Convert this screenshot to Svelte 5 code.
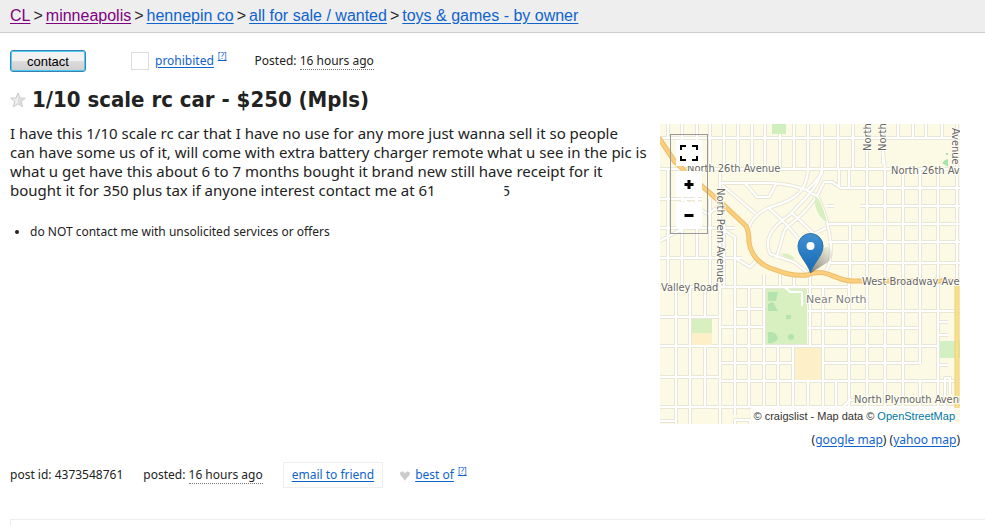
<script>
  const crumbs = [
    { label: 'CL', visited: true },
    { label: 'minneapolis', visited: true },
    { label: 'hennepin co' },
    { label: 'all for sale / wanted' },
    { label: 'toys & games - by owner' }
  ];

  const bodyLines = [
    'I have this 1/10 scale rc car that I have no use for any more just wanna sell it so people',
    'can have some us of it, will come with extra battery charger remote what u see in the pic is',
    'what u get have this about 6 to 7 months bought it brand new still have receipt for it'
  ];

  // [x, from, to]
  const avenues = [
    [8, 0, 14], [22, 0, 163], [37, 0, 134], [50, 0, 45], [64, 0, 45], [78, 0, 45],
    [92, 0, 45], [105, 0, 45], [120, 0, 45], [134, 0, 45], [148, 0, 45],
    [8, 45, 163], [50, 75, 163], [64, 100, 163],
    [16, 163, 300], [30, 163, 300], [45, 163, 193], [45, 222, 283], [60, 45, 300],
    [75, 134, 291], [89, 163, 283], [104, 150, 283], [118, 222, 257], [133, 222, 257], [148, 257, 283],
    [162, 0, 50], [178, 0, 45], [193, 0, 45], [207, 0, 45], [223, 0, 40],
    [238, 0, 15], [253, 0, 15], [266, 0, 15], [282, 0, 15],
    [179, 45, 64], [189, 45, 64], [190, 100, 155],
    [207, 45, 283], [225, 45, 283], [243, 45, 283], [260, 45, 240], [278, 45, 283], [297, 0, 160],
    [163, 163, 283], [189, 157, 283], [176, 258, 283], [260, 258, 283],
    [118, 257, 283], [133, 257, 283], [150, 163, 222], [150, 150, 163], [120, 150, 163], [134, 150, 163]
  ];

  // [y, from, to]
  const streets = [
    [14, 0, 300], [45, 0, 300], [75, 0, 42], [104, 0, 75], [134, 0, 82],
    [163, 0, 189], [193, 0, 60], [222, 0, 278], [253, 0, 60], [283, 0, 75],
    [185, 75, 104], [203, 60, 104], [239, 60, 133], [257, 60, 300], [283, 60, 300], [297, 0, 16],
    [64, 180, 300], [82, 200, 300], [100, 168, 300], [118, 168, 300], [139, 168, 300],
    [187, 148, 300], [204, 148, 260], [239, 163, 260],
    [82, 167, 174], [198, 278, 288], [211, 278, 288], [241, 278, 288]
  ];

  const lanes = [
    'M61 59 H110 Q132 60 146 66 L157 72',
    'M62 61 L96 90 M85 59 L97 73 H109 L116 60',
    'M148 45 C147 72 128 78 108 84 C98 89 92 95 89 103',
    'M162 45 C158 66 142 76 131 90 C110 104 104 116 110 130 L134 138 L148 149',
    'M109 84 L126 100 L138 114 M131 88 L154 110 L166 104',
    'M157 72 C146 88 136 96 126 104 C121 112 122 121 116 134',
    'M146 66 C154 62 158 52 162 50',
    'M157 72 C164 84 169 104 171 121 Q171 140 165 150',
    'M157 72 L164 58 H172 L181 64',
    'M60 104 L75 113 V134 M75 134 L90 143 L98 135',
    'M0 117 L28 102 M22 75 L48 90 L62 80 M36 60 L36 80',
    'M222 20 L225 45',
    'M125 163 L130 168 L142 168 L142 182 M75 300 L75 296 L90 296 L90 300',
    'M178 288 L190 276 L200 276 M285 283 L285 254 L290 254 L290 270'
  ];

  const gridPath = [
    ...avenues.map(([x, a, b]) => `M${x} ${a}V${b}`),
    ...streets.map(([y, a, b]) => `M${a} ${y}H${b}`),
    ...lanes
  ].join(' ');

  const highway =
    'M-1 14 L15 38 L25 47 L43 63 L67 84 L86 102 Q89 107 89 118 C91 134 104 143 116 146 C128 151 138 152 147 151 C154 148 162 148 168 150 C178 154 184 157 192 157 L300 157';
</script>

<header>
  <nav aria-label="Breadcrumb">
    {#each crumbs as crumb, i}
      {#if i > 0}<span class="sep">&gt;</span>{/if}<a href="#top" class:visited={crumb.visited}>{crumb.label}</a>
    {/each}
  </nav>
</header>

<main>
  <div class="toolbar">
    <button class="contact" type="button">contact</button>
    <div class="flag">
      <input type="checkbox" aria-label="flag as prohibited" />
      <a href="#prohibited">prohibited</a>
      <a class="help" href="#help">[?]</a>
    </div>
    <div>Posted: <time>16 hours ago</time></div>
  </div>

  <h1>
    <svg class="star" viewBox="0 0 16 16" aria-hidden="true">
      <path d="M8 1 L10 6 L15.3 6.2 L11.2 9.5 L12.6 14.8 L8 11.8 L3.4 14.8 L4.8 9.5 L.7 6.2 L6 6 Z" />
      <path class="facet" d="M8 11 L12 14 L10.500 9.500 L14 7 H9.500 L8 4 Z" />
    </svg>
    1/10 scale rc car - $250 (Mpls)
  </h1>

  <div class="posting">
    <section class="description">
      <p>
        {#each bodyLines as line}
          {line}<br />
        {/each}
        bought it for 350 plus tax if anyone interest contact me at <span class="area">61</span><span class="last">5</span>
      </p>
      <ul>
        <li>do NOT contact me with unsolicited services or offers</li>
      </ul>
    </section>

    <aside>
      <div class="map">
        <svg class="tiles" viewBox="0 0 300 300" role="img" aria-label="Map of Near North">
          <defs>
            <linearGradient id="pin" x1="0" y1="0" x2="0" y2="1">
              <stop offset="0" stop-color="#3f91d0" />
              <stop offset="1" stop-color="#1468b4" />
            </linearGradient>
            <linearGradient id="shade" x1="0" y1="1" x2="1" y2="0">
              <stop offset="0" stop-color="#333" stop-opacity=".6" />
              <stop offset="1" stop-color="#333" stop-opacity="0" />
            </linearGradient>
          </defs>
          <rect width="300" height="300" fill="#fcf9e4" />
          <path class="casing" d={gridPath} />
          <path class="street" d={gridPath} />

          <rect x="112" y="0" width="14" height="10" fill="#cfefbd" />
          <path d="M282 39 L285 36 L288 35 V43 Z M286 29 h2 v2 h-2 z" fill="#a9e3ae" />
          <path d="M155 72 Q161 74 167 98 Q158 94 155 80 Z" fill="#d8efc0" />
          <path d="M121 130 Q129 128 135 135 Q128 136 121 130 Z" fill="#d8efc0" />
          <rect x="106" y="165" width="41" height="55" fill="#d8efc0" />
          <path d="M108 168 h10 l-2 9 h-8z M108 180 l5-2 5 9 h-10z M108 208 q9-1 10 7 q-4 5-10 4z M126 191 h5 v4 h-5z" fill="#b4e4ae" />
          <circle cx="131" cy="213" r="3" fill="#b4e4ae" />
          <path class="street" d="M125 163 L130 168 H142 V182" />
          <rect x="32" y="195" width="20" height="14" fill="#d8efc0" />
          <rect x="32" y="209" width="20" height="12" fill="#fdf0c9" />
          <rect x="135" y="224" width="26" height="32" fill="#fdf0c9" />
          <rect x="280" y="217" width="20" height="17" fill="#d3f0c2" />

          <path d="M297 160 V300" fill="none" stroke="#ead07c" stroke-width="5" />
          <path d="M297 160 V300" fill="none" stroke="#fbe08a" stroke-width="3" />
          <path class="highway-edge" d={highway} />
          <path class="highway" d={highway} />

          <g class="labels">
            <text x="27" y="48">North 26th Avenue</text>
            <text x="231" y="50">North 26th Avenue</text>
            <text transform="translate(57 64) rotate(90)">North Penn Avenue</text>
            <text x="1" y="167">Valley Road</text>
            <text x="202" y="161">West Broadway Avenue</text>
            <text x="194" y="279">North Plymouth Avenue</text>
            <text class="district" x="146" y="179">Near North</text>
            <text transform="translate(211 27) rotate(-90)">North Penn</text>
            <text transform="translate(226 27) rotate(-90)">North Penn</text>
            <text transform="translate(292 4) rotate(90)">Avenue</text>
          </g>

          <path d="M151 149 C154 137 157 127 166 123 C174 122 174 132 168 138 Z" fill="url(#shade)" />
          <path d="M150.500 149 C148 139 138 132 138 122 A12 12 0 0 1 163 122 C163 132 153 139 150.500 149 Z" fill="url(#pin)" stroke="#2b72a8" />
          <circle cx="150.500" cy="122" r="4" fill="#fff" />
        </svg>

        <div class="controls">
          <button type="button" aria-label="Full screen">
            <svg viewBox="0 0 18 16"><path d="M1 5 V1 H6 M12 1 H17 V5 M17 11 V15 H12 M6 15 H1 V11" /></svg>
          </button>
          <button type="button" aria-label="Zoom in">
            <svg viewBox="0 0 18 16"><path class="bold" d="M4.500 8.500 H13.500 M9 4 V13" /></svg>
          </button>
          <button type="button" aria-label="Zoom out">
            <svg viewBox="0 0 18 16"><path class="bold" d="M4.500 8.500 H13.500" /></svg>
          </button>
        </div>

        <div class="attribution">© craigslist - Map data © <a href="#osm">OpenStreetMap</a></div>
      </div>
      <p class="map-links">(<a href="#google">google map</a>) (<a href="#yahoo">yahoo map</a>)</p>
    </aside>
  </div>

  <footer>
    <span>post id: 4373548761</span>
    <span>posted: <time>16 hours ago</time></span>
    <a class="email" href="#email">email to friend</a>
    <div class="best">
      <svg viewBox="0 0 12 12" aria-hidden="true">
        <path d="M6 12 C5 9 1 7 1 4.500 C1 2 5 1.500 6 4.500 C7 1.500 11 2 11 4.500 C11 7 7 9 6 12 Z" />
      </svg>
      <a href="#best">best of</a>
      <a class="help" href="#help">[?]</a>
    </div>
  </footer>
</main>

<div class="next-box"></div>

<style>
  :global(body) {
    margin: 0;
    background: #fff;
    color: #222;
    font-family: "Noto Sans", "Open Sans", sans-serif;
    font-size: 12px;
    line-height: 16px;
  }

  a {
    color: #0f63cc;
    text-underline-offset: 2px;
  }

  header {
    background: #eee;
    border-bottom: 1px solid #ccc;
    padding: 6px 10px;
  }

  nav {
    display: flex;
    font-family: "Liberation Sans", Arial, sans-serif;
    font-size: 16px;
    line-height: 20px;
    white-space: nowrap;
  }

  .sep {
    padding: 0 3px;
  }

  .visited {
    color: #800080;
  }

  main {
    padding: 0 25px 0 10px;
  }

  .toolbar {
    display: flex;
    align-items: center;
    height: 24px;
    margin-top: 16px;
  }

  .contact {
    width: 76px;
    height: 22px;
    margin-right: 45px;
    padding: 0;
    border: 1px solid #3c7fb1;
    border-radius: 3px;
    box-shadow: inset 0 0 0 1px #48cdf4;
    background: linear-gradient(#f2f2f2 48%, #dcdcdc 52%, #cfcfcf);
    color: #000;
    font-family: "Liberation Sans", Arial, sans-serif;
    font-size: 13px;
  }

  .flag {
    display: flex;
    align-items: center;
    margin-right: 28px;
  }

  .flag input {
    appearance: none;
    width: 18px;
    height: 18px;
    margin: 0 6px 0 0;
    border: 1px solid #ddd;
    background: #fff;
  }

  .help {
    align-self: flex-start;
    margin-left: 4px;
    font-size: 8px;
    line-height: 8px;
    text-underline-offset: 1px;
  }

  time {
    border-bottom: 1px dotted #777;
  }

  h1 {
    display: flex;
    align-items: center;
    gap: 6px;
    margin: 13px 0 10px;
    font-family: "DejaVu Sans Condensed", Tahoma, sans-serif;
    font-size: 22px;
    line-height: 28px;
    white-space: nowrap;
  }

  .star {
    width: 16px;
    height: 16px;
    fill: #eee;
    stroke: #c8c8c8;
  }

  .facet {
    fill: #dcdcdc;
    stroke: none;
  }

  .posting {
    display: flex;
    justify-content: space-between;
  }

  .description {
    flex: 1;
    min-width: 0;
  }

  .description p {
    margin: 0;
    font-size: 15px;
    line-height: 19px;
    white-space: nowrap;
  }

  .area {
    display: inline-block;
    width: 15px;
    overflow: hidden;
    vertical-align: top;
  }

  .last {
    margin-left: 68px;
    clip-path: inset(0 0 0 3px);
  }

  ul {
    margin: 24px 0 0;
    padding-left: 20px;
  }

  .map {
    position: relative;
    width: 300px;
    overflow: hidden;
  }

  .tiles {
    display: block;
    width: 100%;
  }

  .casing,
  .street,
  .highway,
  .highway-edge {
    fill: none;
    stroke-linejoin: round;
  }

  .casing {
    stroke: #e8e6d6;
    stroke-width: 4;
  }

  .street {
    stroke: #fff;
    stroke-width: 2;
  }

  .highway-edge {
    stroke: #ecbd6a;
    stroke-width: 5;
  }

  .highway {
    stroke: #fccf7c;
    stroke-width: 3;
  }

  .labels {
    fill: #666;
    stroke: #fffef4;
    stroke-width: 2px;
    paint-order: stroke;
    font-family: "DejaVu Sans Condensed", sans-serif;
    font-size: 11px;
  }

  .district {
    fill: #808080;
    font-family: "DejaVu Sans", sans-serif;
  }

  .controls {
    position: absolute;
    top: 10px;
    left: 10px;
    display: flex;
    flex-direction: column;
    gap: 5px;
    padding: 5px;
    border: 1px solid #999;
  }

  .controls button {
    display: grid;
    place-items: center;
    width: 26px;
    height: 26px;
    padding: 0;
    border: 0;
    background: #fff;
  }

  .controls svg {
    width: 18px;
    height: 16px;
    fill: none;
    stroke: #000;
    stroke-width: 2;
  }

  .controls .bold {
    stroke-width: 3;
  }

  .attribution {
    position: absolute;
    right: 0;
    bottom: 0;
    padding: 0 5px 0 3px;
    background: rgba(255, 255, 255, 0.8);
    color: #333;
    font-family: "Liberation Sans", Arial, sans-serif;
    font-size: 11px;
    white-space: nowrap;
  }

  .attribution a {
    color: #0078a8;
    text-decoration: none;
  }

  .map-links {
    margin: 8px 0 0;
    text-align: right;
    white-space: nowrap;
  }

  footer {
    display: flex;
    align-items: center;
    margin-top: 14px;
    white-space: nowrap;
  }

  footer > span {
    margin-right: 20px;
  }

  .email {
    padding: 4px 8px;
    border: 1px solid #eee;
  }

  .best {
    display: flex;
    align-items: center;
    margin-left: 16px;
  }

  .best svg {
    width: 12px;
    height: 12px;
    margin-right: 4px;
    fill: #ccc;
  }

  .next-box {
    height: 6px;
    margin: 31px 0 0 10px;
    border: solid #eee;
    border-width: 1px 0 0 1px;
  }
</style>
